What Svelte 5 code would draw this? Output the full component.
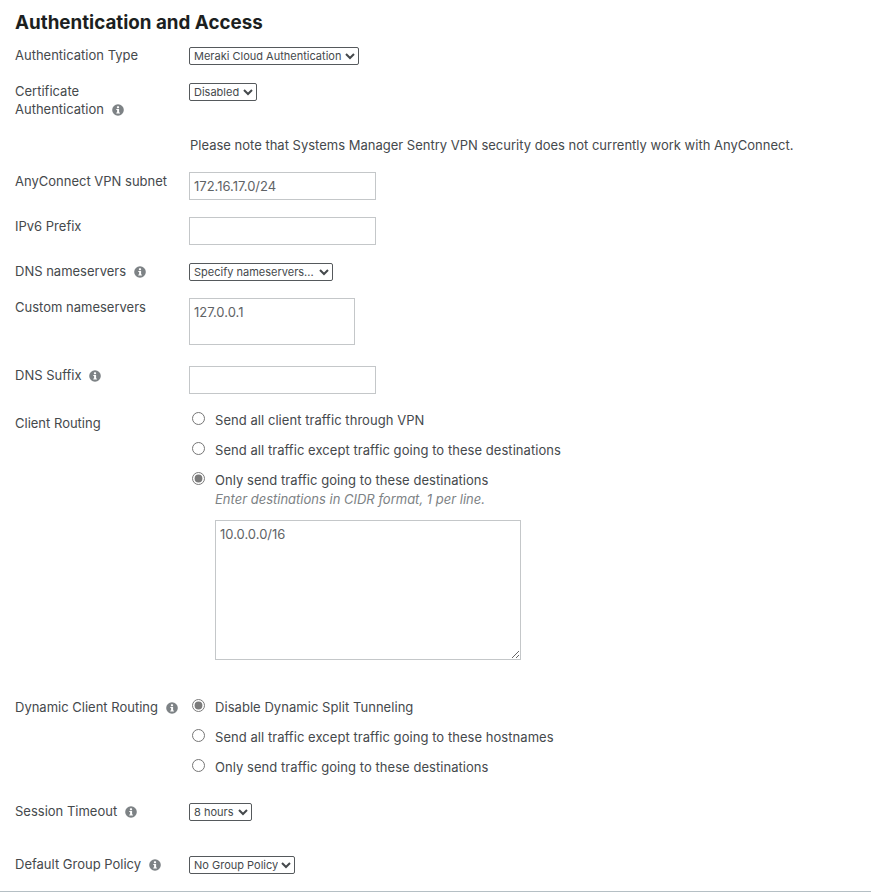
<script>
  const clientRouting = [
    "Send all client traffic through VPN",
    "Send all traffic except traffic going to these destinations",
    "Only send traffic going to these destinations"
  ];
  const dynamicRouting = [
    "Disable Dynamic Split Tunneling",
    "Send all traffic except traffic going to these hostnames",
    "Only send traffic going to these destinations"
  ];
</script>

{#snippet info()}
  <svg class="info" viewBox="0 0 12 12" aria-hidden="true">
    <circle cx="6" cy="6" r="5.8" fill="#7d8285" />
    <rect x="4.9" y="2.2" width="2.2" height="2" rx="0.6" fill="#fff" />
    <path d="M4.3 5h2.8v3.6h.8v1H4.3v-1h.8V6h-.8z" fill="#fff" />
  </svg>
{/snippet}

<section class="page">
  <h2>Authentication and Access</h2>

  <div class="row auth">
    <span class="label">Authentication Type</span>
    <select><option>Meraki Cloud Authentication</option></select>
  </div>

  <div class="row cert">
    <span class="label">Certificate<br />Authentication {@render info()}</span>
    <select><option>Disabled</option></select>
  </div>

  <div class="row note">
    <span class="label"></span>
    <p>Please note that Systems Manager Sentry VPN security does not currently work with AnyConnect.</p>
  </div>

  <div class="row subnet">
    <span class="label">AnyConnect VPN subnet</span>
    <input type="text" value="172.16.17.0/24" />
  </div>

  <div class="row ipv6">
    <span class="label">IPv6 Prefix</span>
    <input type="text" />
  </div>

  <div class="row dns">
    <span class="label">DNS nameservers {@render info()}</span>
    <select><option>Specify nameservers...</option></select>
  </div>

  <div class="row custom">
    <span class="label">Custom nameservers</span>
    <textarea class="servers">127.0.0.1</textarea>
  </div>

  <div class="row suffix">
    <span class="label">DNS Suffix {@render info()}</span>
    <input type="text" />
  </div>

  <div class="row routing">
    <span class="label routing-label">Client Routing</span>
    <div class="radios">
      {#each clientRouting as text, i}
        <label class="radio">
          <input type="radio" name="routing" checked={i === 2} />
          <span>{text}</span>
        </label>
      {/each}
      <em>Enter destinations in CIDR format, 1 per line.</em>
      <textarea class="destinations">10.0.0.0/16</textarea>
    </div>
  </div>

  <div class="row dynamic">
    <span class="label">Dynamic Client Routing {@render info()}</span>
    <div class="radios">
      {#each dynamicRouting as text, i}
        <label class="radio">
          <input type="radio" name="dynamic" checked={i === 0} />
          <span>{text}</span>
        </label>
      {/each}
    </div>
  </div>

  <div class="row session">
    <span class="label">Session Timeout {@render info()}</span>
    <select><option>8 hours</option></select>
  </div>

  <div class="row policy">
    <span class="label">Default Group Policy {@render info()}</span>
    <select><option>No Group Policy</option></select>
  </div>
</section>

<style>
  :global(body) {
    background: #fff;
  }

  .page {
    box-sizing: border-box;
    height: 892px;
    padding: 12px 0 0 15px;
    border-bottom: 1px solid #b5bfc4;
    font-family: Inter, "Liberation Sans", sans-serif;
    font-size: 13px;
    line-height: 18px;
    color: #45494c;
    overflow: hidden;
  }

  h2 {
    margin: 0 0 13px;
    font-size: 18.8px;
    line-height: 22px;
    font-weight: 700;
    color: #1c1f21;
  }

  .row {
    display: flex;
    align-items: flex-start;
  }

  .label {
    flex: 0 0 174px;
  }

  .auth .label,
  .cert .label,
  .dns .label,
  .session .label,
  .policy .label {
    margin-top: -1px;
  }

  .info {
    width: 12px;
    height: 12px;
    margin-left: 4px;
    vertical-align: -2px;
  }

  select {
    box-sizing: border-box;
    height: 18px;
    padding: 0;
    font-family: inherit;
    font-size: 11px;
    color: #45494c;
    background: #fff;
    border: 1px solid #55595c;
    border-radius: 2px;
  }

  .dns select { width: 144px; }
  .session select { width: 63px; }
  .policy select { width: 106px; }

  input[type="text"],
  textarea {
    box-sizing: border-box;
    padding: 4px;
    font-family: inherit;
    font-size: 13px;
    line-height: 18px;
    color: #5f6366;
    background: #fff;
    border: 1px solid #c4c7c9;
    border-radius: 0;
    outline: none;
  }

  input[type="text"] {
    width: 187px;
    height: 28px;
  }

  .note p {
    margin: 0;
    padding-left: 1px;
  }

  .auth { margin-bottom: 18px; }
  .cert { margin-bottom: 18px; }
  .note { margin-bottom: 18px; }
  .subnet { margin-bottom: 17px; }
  .ipv6 { margin-bottom: 18px; }
  .dns { margin-bottom: 17px; }
  .custom { margin-bottom: 21px; }
  .suffix { margin-bottom: 17px; }
  .routing { margin-bottom: 38px; }
  .dynamic { margin-bottom: 15px; }
  .session { margin-bottom: 35px; }

  .routing-label {
    padding-top: 3px;
  }

  .servers {
    display: block;
    width: 166px;
    height: 47px;
    resize: none;
  }

  .radios {
    display: flex;
    flex-direction: column;
    align-items: flex-start;
  }

  .radio {
    display: flex;
    align-items: center;
    height: 18px;
    margin-bottom: 12px;
    letter-spacing: 0.05px;
  }

  .radio input {
    width: 13px;
    height: 13px;
    margin: 0 10px 0 3px;
    position: relative;
    top: -2px;
    accent-color: #7a7a7a;
  }

  .radios em {
    margin: -11px 0 0 26px;
    font-size: 13px;
    color: #7d8285;
  }

  .destinations {
    display: block;
    width: 306px;
    height: 140px;
    margin: 12px 0 0 26px;
  }
</style>
